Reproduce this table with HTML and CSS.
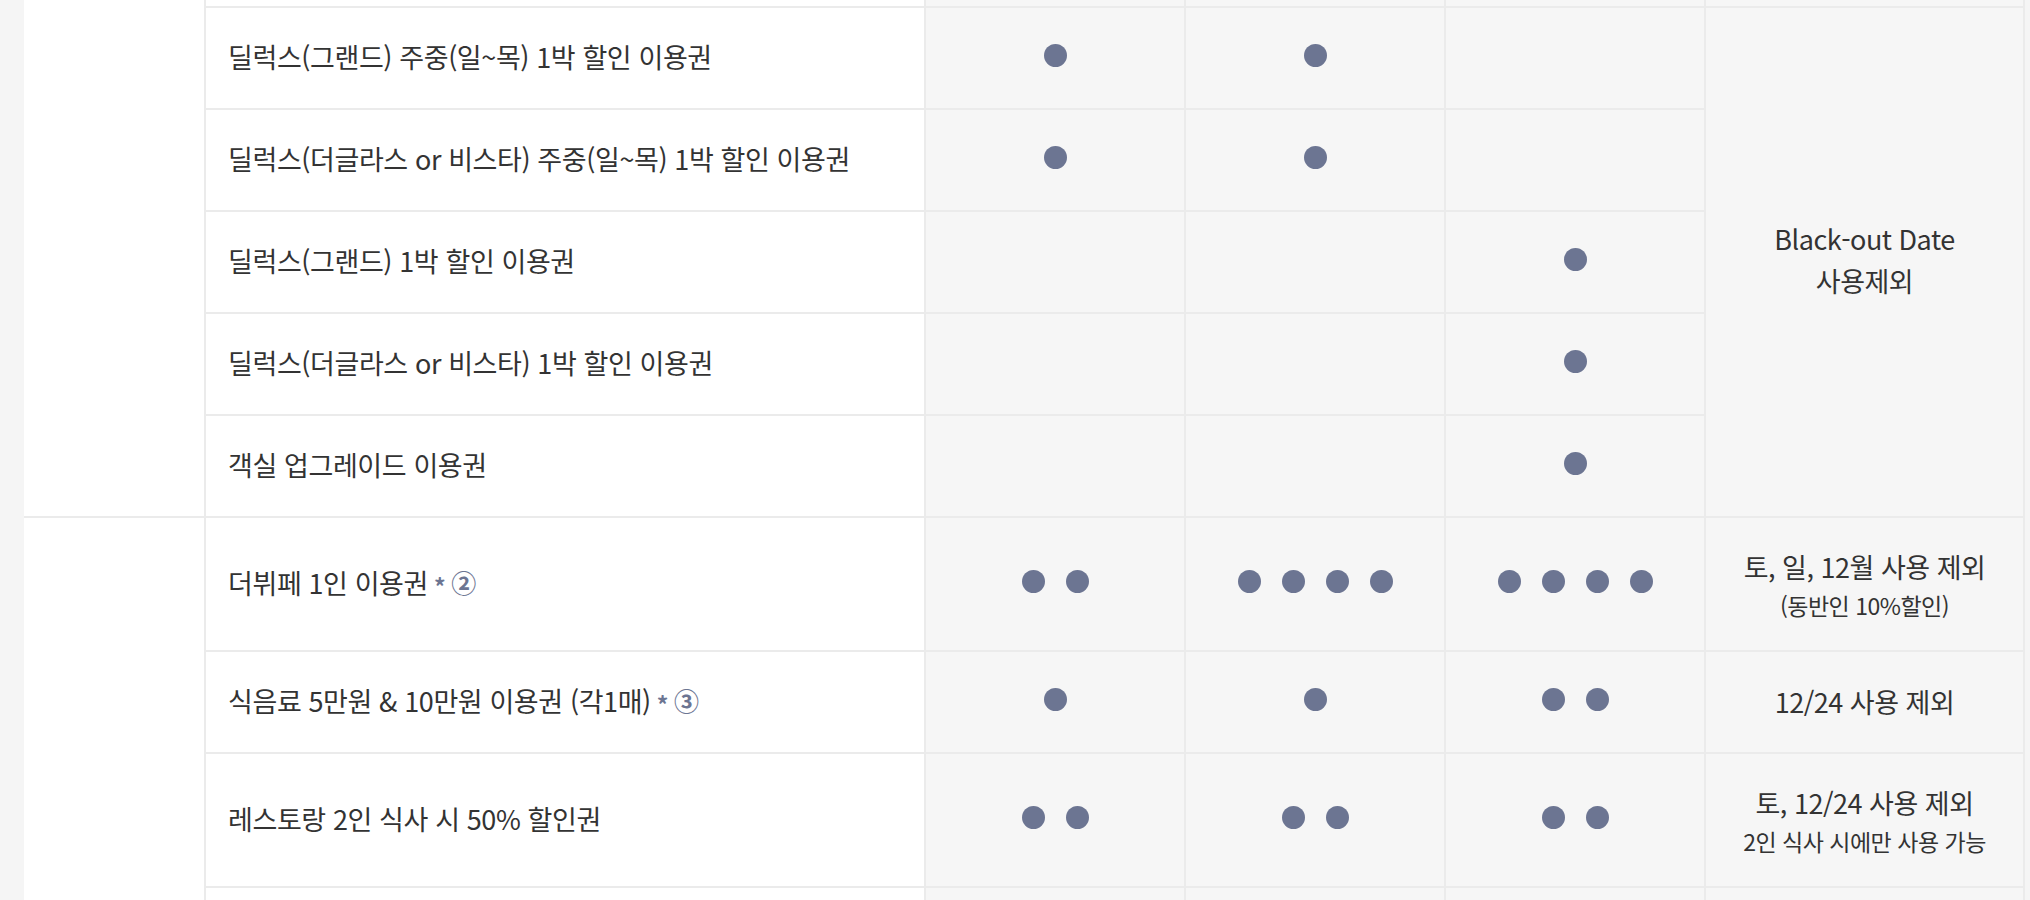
FILE: index.html
```html
<!DOCTYPE html>
<html lang="ko">
<head>
<meta charset="utf-8">
<title>혜택 이용권</title>
<link rel="stylesheet" href="styles.css">
</head>
<body>
<div class="bt">
  <div class="cat c-span6"></div>
  <div class="item"></div>
  <div class="pt"></div>
  <div class="pt"></div>
  <div class="pt"></div>
  <div class="note"></div>

  <div class="item">딜럭스(그랜드) 주중(일~목) 1박 할인 이용권</div>
  <div class="pt"><div class="dots"><i class="dot"></i></div></div>
  <div class="pt"><div class="dots"><i class="dot"></i></div></div>
  <div class="pt"></div>
  <div class="note n-span5"><p class="l1">Black-out Date</p><p class="l1">사용제외</p></div>

  <div class="item">딜럭스(더글라스 or 비스타) 주중(일~목) 1박 할인 이용권</div>
  <div class="pt"><div class="dots"><i class="dot"></i></div></div>
  <div class="pt"><div class="dots"><i class="dot"></i></div></div>
  <div class="pt"></div>

  <div class="item">딜럭스(그랜드) 1박 할인 이용권</div>
  <div class="pt"></div>
  <div class="pt"></div>
  <div class="pt"><div class="dots"><i class="dot"></i></div></div>

  <div class="item">딜럭스(더글라스 or 비스타) 1박 할인 이용권</div>
  <div class="pt"></div>
  <div class="pt"></div>
  <div class="pt"><div class="dots"><i class="dot"></i></div></div>

  <div class="item">객실 업그레이드 이용권</div>
  <div class="pt"></div>
  <div class="pt"></div>
  <div class="pt"><div class="dots"><i class="dot"></i></div></div>

  <div class="cat c-span4"></div>
  <div class="item">더뷔페 1인 이용권<span class="ast">*</span><span class="num">②</span></div>
  <div class="pt"><div class="dots"><i class="dot"></i><i class="dot"></i></div></div>
  <div class="pt"><div class="dots"><i class="dot"></i><i class="dot"></i><i class="dot"></i><i class="dot"></i></div></div>
  <div class="pt"><div class="dots"><i class="dot"></i><i class="dot"></i><i class="dot"></i><i class="dot"></i></div></div>
  <div class="note"><p class="l1">토, 일, 12월 사용 제외</p><p class="l2">(동반인 10%할인)</p></div>

  <div class="item">식음료 5만원 &amp; 10만원 이용권 (각1매)<span class="ast">*</span><span class="num">③</span></div>
  <div class="pt"><div class="dots"><i class="dot"></i></div></div>
  <div class="pt"><div class="dots"><i class="dot"></i></div></div>
  <div class="pt"><div class="dots"><i class="dot"></i><i class="dot"></i></div></div>
  <div class="note"><p class="l1">12/24 사용 제외</p></div>

  <div class="item">레스토랑 2인 식사 시 50% 할인권</div>
  <div class="pt"><div class="dots"><i class="dot"></i><i class="dot"></i></div></div>
  <div class="pt"><div class="dots"><i class="dot"></i><i class="dot"></i></div></div>
  <div class="pt"><div class="dots"><i class="dot"></i><i class="dot"></i></div></div>
  <div class="note"><p class="l1">토, 12/24 사용 제외</p><p class="l2">2인 식사 시에만 사용 가능</p></div>

  <div class="item"></div>
  <div class="pt"></div>
  <div class="pt"></div>
  <div class="pt"></div>
  <div class="note"></div>
</div>
</body>
</html>
```

FILE: styles.css
```css
html, body {
  margin: 0;
  padding: 0;
  height: 900px;
  overflow: hidden;
  background: #f5f5f5;
}

body {
  font-family: "Noto Sans CJK KR", "Noto Sans", sans-serif;
  color: #333;
}

.bt {
  display: grid;
  width: max-content;
  margin-left: 24px;
  padding-right: 2px;
  background: #ebebeb;
  column-gap: 2px;
  row-gap: 2px;
  grid-template-columns: 180px 718px 258px 258px 258px 317px;
  grid-template-rows: 6px 100px 100px 100px 100px 100px 132px 100px 132px 100px;
}

.cat {
  background: #fff;
}

.c-span6 {
  grid-row: span 6;
}

.c-span4 {
  grid-row: span 4;
}

.item {
  background: #fff;
  display: flex;
  align-items: center;
  padding-left: 22px;
  padding-bottom: 4px;
  font-size: 27px;
  letter-spacing: -0.4px;
  white-space: nowrap;
}

.ast {
  color: #6c7592;
  font-size: 23px;
  font-weight: 700;
  margin-left: 6px;
  position: relative;
  top: 4px;
}

.num {
  color: #6c7592;
  font-size: 25px;
  font-weight: 700;
  margin-left: 6px;
}

.pt {
  background: #f6f6f6;
  display: flex;
  align-items: center;
  justify-content: center;
}

.dots {
  display: flex;
  gap: 21px;
  padding-bottom: 5px;
}

.dot {
  display: block;
  width: 23px;
  height: 23px;
  border-radius: 50%;
  background: #6c7592;
}

.note {
  background: #f6f6f6;
  display: flex;
  flex-direction: column;
  align-items: center;
  justify-content: center;
  text-align: center;
}

.n-span5 {
  grid-row: span 5;
  padding-bottom: 4px;
}

.note p {
  margin: 0;
}

.l1 {
  font-size: 27px;
  line-height: 42px;
  letter-spacing: -0.5px;
}

.l2 {
  font-size: 23px;
  line-height: 34px;
  letter-spacing: -0.5px;
}
```
